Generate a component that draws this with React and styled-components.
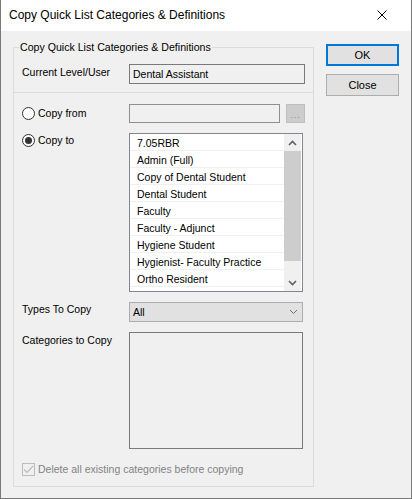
import React from 'react'
import styled, { createGlobalStyle } from 'styled-components'

const GlobalStyle = createGlobalStyle`
  html, body {
    margin: 0;
    padding: 0;
    background: #f0f0f0;
  }
  * {
    box-sizing: border-box;
  }
`

const Window = styled.div`
  width: 412px;
  height: 499px;
  background: #f0f0f0;
  border: 1px solid #7a7a7a;
  border-top: none;
  display: flex;
  flex-direction: column;
  font-family: "Liberation Sans", Arial, sans-serif;
  font-size: 10.5px;
  color: #000;
`

const TitleBar = styled.div`
  height: 31px;
  background: #fff;
  display: flex;
  align-items: center;
  justify-content: space-between;
  padding: 0 0 1px 8px;
`

const TitleText = styled.span`
  font-size: 12px;
  color: #000;
`

const CloseGlyph = styled.div`
  width: 46px;
  height: 30px;
  display: flex;
  align-items: center;
  justify-content: center;
  margin-right: 6px;
`

const Body = styled.div`
  flex: 1;
  display: flex;
  align-items: flex-start;
  padding: 0 12px;
`

const GroupBox = styled.fieldset`
  width: 301px;
  margin: 10px 0 0;
  padding: 0 8px 10px;
  border: 1px solid #dcdcdc;
  display: flex;
  flex-direction: column;
`

const Legend = styled.legend`
  padding: 0 1px;
  margin-left: -3px;
  line-height: 13px;
  font-size: 10.6px;
`

const Row = styled.div`
  display: flex;
  align-items: ${p => p.$align || 'flex-start'};
  margin-top: ${p => p.$top}px;
`

const Label = styled.div`
  width: 107px;
  flex-shrink: 0;
  line-height: 13px;
  padding-top: ${p => p.$pad || 0}px;
`

const Divider = styled.div`
  height: 1px;
  background: #dcdcdc;
  margin: 8px -9px 0;
`

const TextBox = styled.div`
  width: ${p => p.$w}px;
  height: ${p => p.$h}px;
  background: #f0f0f0;
  border: 1px solid ${p => p.$border || '#7a7a7a'};
  padding: 0 0 0 3px;
  line-height: ${p => p.$h - 2}px;
`

const BrowseButton = styled.div`
  width: 19px;
  height: 19px;
  margin-left: 6px;
  background: #cccccc;
  border: 1px solid #bfbfbf;
  color: #8a8a8a;
  font-size: 9px;
  letter-spacing: 1px;
  display: flex;
  align-items: center;
  justify-content: center;
  padding-top: 2px;
`

const RadioLabel = styled.label`
  width: 107px;
  flex-shrink: 0;
  display: flex;
  align-items: center;
  gap: 3px;
  line-height: 13px;
  padding-top: ${p => p.$pad || 0}px;
`

const RadioCircle = styled.span`
  width: 13px;
  height: 13px;
  border-radius: 50%;
  border: 1px solid #333;
  background: #fff;
  display: flex;
  align-items: center;
  justify-content: center;
  &::after {
    content: '';
    width: 7px;
    height: 7px;
    border-radius: 50%;
    background: ${p => (p.$checked ? '#333' : 'transparent')};
  }
`

const ListBox = styled.div`
  width: 174px;
  height: 159px;
  border: 1px solid #828790;
  background: #fff;
  display: flex;
  overflow: hidden;
`

const Items = styled.div`
  flex: 1;
  display: flex;
  flex-direction: column;
`

const Item = styled.div`
  height: 17px;
  flex-shrink: 0;
  padding: 2px 0 0 7px;
  line-height: 14px;
  border-bottom: 1px solid #f0f0f0;
  white-space: nowrap;
`

const ScrollBar = styled.div`
  width: 17px;
  margin-right: 1px;
  background: #f0f0f0;
  display: flex;
  flex-direction: column;
`

const ScrollArrow = styled.div`
  height: 17px;
  flex-shrink: 0;
  display: flex;
  align-items: center;
  justify-content: center;
`

const Thumb = styled.div`
  height: 110px;
  background: #cdcdcd;
  flex-shrink: 0;
`

const Track = styled.div`
  flex: 1;
`

const Combo = styled.div`
  width: 174px;
  height: 20px;
  background: #e1e1e1;
  border: 1px solid #adadad;
  display: flex;
  align-items: center;
  justify-content: space-between;
  padding: 0 4px 0 3px;
`

const CheckRow = styled.label`
  display: flex;
  align-items: center;
  gap: 3px;
  margin-top: 14px;
  color: #838383;
  line-height: 13px;
`

const CheckBox = styled.span`
  width: 13px;
  height: 13px;
  border: 1px solid #bcbcbc;
  background: #f0f0f0;
  display: flex;
  align-items: center;
  justify-content: center;
`

const ButtonColumn = styled.div`
  display: flex;
  flex-direction: column;
  gap: 8px;
  margin: 13px 0 0 12px;
`

const Button = styled.div`
  width: 73px;
  height: 22px;
  background: #e1e1e1;
  border: ${p => (p.$default ? '2px solid #0078d7' : '1px solid #adadad')};
  display: flex;
  align-items: center;
  justify-content: center;
  font-size: 11px;
`

const Chevron = ({ up, color = '#606060', width = 1.6 }) => (
  <svg width="9" height="6" viewBox="0 0 9 6">
    <polyline
      points={up ? '1,5 4.5,1.5 8,5' : '1,1 4.5,4.5 8,1'}
      fill="none"
      stroke={color}
      strokeWidth={width}
    />
  </svg>
)

const users = [
  '7.05RBR',
  'Admin (Full)',
  'Copy of Dental Student',
  'Dental Student',
  'Faculty',
  'Faculty - Adjunct',
  'Hygiene Student',
  'Hygienist- Faculty Practice',
  'Ortho Resident'
]

const App = () => (
  <>
    <GlobalStyle />
    <Window>
      <TitleBar>
        <TitleText>Copy Quick List Categories &amp; Definitions</TitleText>
        <CloseGlyph>
          <svg width="10" height="10" viewBox="0 0 10 10">
            <path d="M0.5 0.5 L9.5 9.5 M9.5 0.5 L0.5 9.5" stroke="#000" strokeWidth="1" />
          </svg>
        </CloseGlyph>
      </TitleBar>
      <Body>
        <GroupBox>
          <Legend>Copy Quick List Categories &amp; Definitions</Legend>
          <Row $top={10}>
            <Label $pad={2}>Current Level/User</Label>
            <TextBox $w={176} $h={20}>Dental Assistant</TextBox>
          </Row>
          <Divider />
          <Row $top={11} $align="center">
            <RadioLabel>
              <RadioCircle />
              Copy from
            </RadioLabel>
            <TextBox $w={151} $h={19} $border="#8f8f8f" />
            <BrowseButton>...</BrowseButton>
          </Row>
          <Row $top={10}>
            <RadioLabel $pad={1}>
              <RadioCircle $checked />
              Copy to
            </RadioLabel>
            <ListBox>
              <Items>
                {users.map(u => (
                  <Item key={u}>{u}</Item>
                ))}
              </Items>
              <ScrollBar>
                <ScrollArrow>
                  <Chevron up />
                </ScrollArrow>
                <Thumb />
                <Track />
                <ScrollArrow>
                  <Chevron />
                </ScrollArrow>
              </ScrollBar>
            </ListBox>
          </Row>
          <Row $top={10}>
            <Label $pad={1}>Types To Copy</Label>
            <Combo>
              All
              <Chevron color="#707070" width={1} />
            </Combo>
          </Row>
          <Row $top={10}>
            <Label $pad={2}>Categories to Copy</Label>
            <TextBox $w={174} $h={117} />
          </Row>
          <CheckRow>
            <CheckBox>
              <svg width="11" height="9" viewBox="0 0 11 9">
                <polyline points="1,4.5 4,7.5 10,1" fill="none" stroke="#bcbcbc" strokeWidth="1.2" />
              </svg>
            </CheckBox>
            Delete all existing categories before copying
          </CheckRow>
        </GroupBox>
        <ButtonColumn>
          <Button $default>OK</Button>
          <Button>Close</Button>
        </ButtonColumn>
      </Body>
    </Window>
  </>
)

export default App
